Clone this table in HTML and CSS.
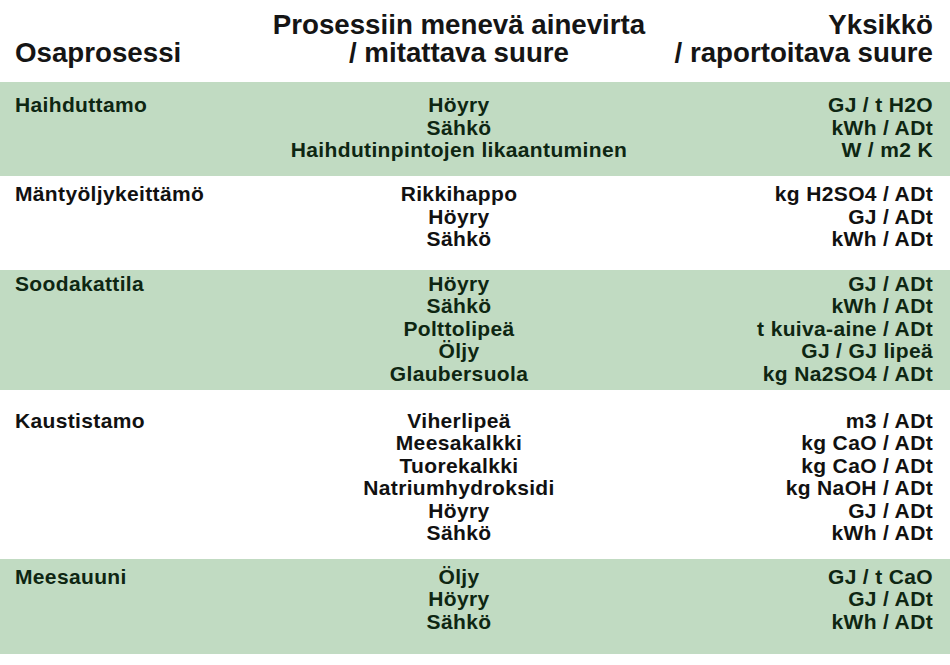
FILE: index.html
```html
<!DOCTYPE html>
<html lang="fi">
<head>
<meta charset="utf-8">
<title>Osaprosessit</title>
<link rel="stylesheet" href="styles.css">
</head>
<body>
<div class="table">
  <div class="row head">
    <div class="c1">Osaprosessi</div>
    <div class="c2">Prosessiin menevä ainevirta<br>/ mitattava suure</div>
    <div class="c3">Yksikkö<br>/ raportoitava suure</div>
  </div>

  <div class="row green r1">
    <div class="c1">Haihduttamo</div>
    <div class="c2">Höyry<br>Sähkö<br>Haihdutinpintojen likaantuminen</div>
    <div class="c3">GJ / t H2O<br>kWh / ADt<br>W / m2 K</div>
  </div>

  <div class="row white r2">
    <div class="c1">Mäntyöljykeittämö</div>
    <div class="c2">Rikkihappo<br>Höyry<br>Sähkö</div>
    <div class="c3">kg H2SO4 / ADt<br>GJ / ADt<br>kWh / ADt</div>
  </div>

  <div class="row green r3">
    <div class="c1">Soodakattila</div>
    <div class="c2">Höyry<br>Sähkö<br>Polttolipeä<br>Öljy<br>Glaubersuola</div>
    <div class="c3">GJ / ADt<br>kWh / ADt<br>t kuiva-aine / ADt<br>GJ / GJ lipeä<br>kg Na2SO4 / ADt</div>
  </div>

  <div class="row white r4">
    <div class="c1">Kaustistamo</div>
    <div class="c2">Viherlipeä<br>Meesakalkki<br>Tuorekalkki<br>Natriumhydroksidi<br>Höyry<br>Sähkö</div>
    <div class="c3">m3 / ADt<br>kg CaO / ADt<br>kg CaO / ADt<br>kg NaOH / ADt<br>GJ / ADt<br>kWh / ADt</div>
  </div>

  <div class="row green r5">
    <div class="c1">Meesauuni</div>
    <div class="c2">Öljy<br>Höyry<br>Sähkö</div>
    <div class="c3">GJ / t CaO<br>GJ / ADt<br>kWh / ADt</div>
  </div>
</div>
</body>
</html>
```

FILE: styles.css
```css
html, body {
  margin: 0;
  padding: 0;
  background: #ffffff;
}

body {
  width: 950px;
  height: 665px;
  overflow: hidden;
  font-family: "Liberation Sans", Arial, Helvetica, sans-serif;
  font-weight: bold;
  color: #111111;
}

.table {
  display: flex;
  flex-direction: column;
}

.row {
  display: grid;
  grid-template-columns: 250px 388px 1fr;
  padding: 0 17px 0 15px;
  box-sizing: border-box;
  font-size: 21px;
  letter-spacing: 0.35px;
  line-height: 22.6px;
  align-items: start;
}

.row .c2 {
  text-align: center;
}

.row .c3 {
  text-align: right;
}

.head {
  height: 82px;
  padding-top: 11px;
  font-size: 27.7px;
  letter-spacing: 0;
  line-height: 28px;
  color: #151515;
}

.head .c1 {
  align-self: end;
  padding-bottom: 15px;
}

.green {
  background: #c1dbc2;
  color: #0e2612;
}

.white {
  background: #ffffff;
  color: #111111;
}

.r1 { height: 94px; padding-top: 12px; }
.r2 { height: 94px; padding-top: 7px; }
.r3 { height: 120px; padding-top: 2.5px; }
.r4 { height: 169px; padding-top: 19.5px; }
.r5 { height: 95px; padding-top: 6.5px; }
```
